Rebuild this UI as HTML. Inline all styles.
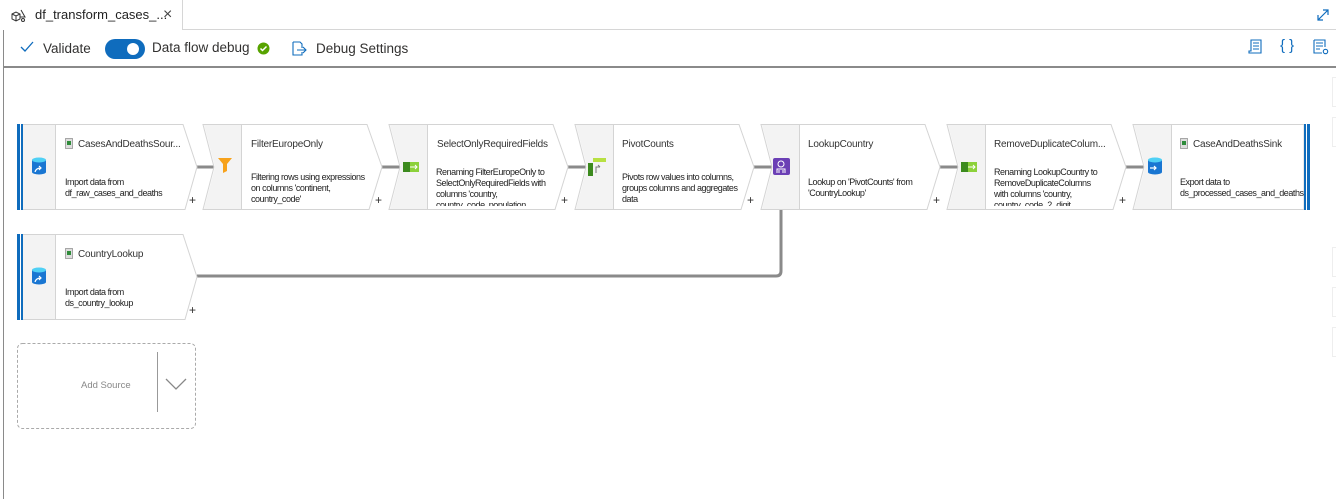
<!DOCTYPE html>
<html><head><meta charset="utf-8"><style>
*{margin:0;padding:0;box-sizing:border-box}
body{width:1336px;height:499px;background:#fff;position:relative;overflow:hidden;font-family:"Liberation Sans",sans-serif;color:#323130}
.a{position:absolute;white-space:nowrap}
.t{font-size:10px;letter-spacing:-0.2px;color:#333}
.d{font-size:9px;letter-spacing:-0.45px;line-height:11px;color:#222;white-space:normal;overflow:hidden}
.tb{font-size:13.5px;color:#323130}
</style></head><body>
<div class="a" style="left:0;top:0;width:183px;height:30px;border-right:1px solid #d6d6d6;background:#fff"></div>
<div class="a" style="left:183px;top:29px;width:1153px;height:1px;background:#d6d6d6"></div>
<svg class="a" style="left:10px;top:8px" width="18" height="16" viewBox="0 0 18 16" fill="none" stroke="#333" stroke-width="1"><path d="M2 6l4-2 4 2v5l-4 2-4-2z M2 6l4 2 4-2 M6 8v5"/><path d="M11 2l4 7h-5"/><circle cx="13" cy="12" r="1.5"/></svg>
<div class="a" style="left:35px;top:7px;font-size:13px;color:#222">df_transform_cases_...</div>
<div class="a" style="left:163px;top:6px;font-size:16px;color:#444">×</div>
<svg class="a" style="left:1316px;top:8px" width="14" height="14" viewBox="0 0 14 14" fill="none" stroke="#0f6cbd" stroke-width="1.2"><path d="M2 12L12 2M7 2h5v5M2 7v5h5"/></svg>
<div class="a" style="left:3px;top:30px;width:1px;height:469px;background:#8a8a8a"></div>
<div class="a" style="left:3px;top:66px;width:1333px;height:2px;background:#8a8a8a"></div>
<svg class="a" style="left:20px;top:41px" width="14" height="12" viewBox="0 0 14 12" fill="none" stroke="#0f6cbd" stroke-width="1.3"><path d="M1 6l4 4 8-9"/></svg>
<div class="a tb" style="left:43px;top:41px">Validate</div>
<div class="a" style="left:105px;top:39px;width:40px;height:20px;border-radius:10px;background:#0f6cbd"></div>
<div class="a" style="left:127px;top:43px;width:12px;height:12px;border-radius:6px;background:#fff"></div>
<div class="a tb" style="left:152px;top:40px">Data flow debug</div>
<svg class="a" style="left:257px;top:42px" width="13" height="13" viewBox="0 0 13 13"><circle cx="6.5" cy="6.5" r="6" fill="#57a300"/><path d="M3.5 6.5l2 2 4-4" stroke="#fff" stroke-width="1.5" fill="none"/></svg>
<svg class="a" style="left:290px;top:40px" width="18" height="18" viewBox="0 0 18 18" fill="none" stroke="#0f6cbd" stroke-width="1.1"><path d="M3 2h7l2 2v4M12 12v3H3V2"/><path d="M7 10h9M13 7l3 3-3 3"/></svg>
<div class="a tb" style="left:316px;top:41px">Debug Settings</div>
<svg class="a" style="left:1247px;top:38px" width="16" height="18" viewBox="0 0 16 18" fill="none" stroke="#0f6cbd" stroke-width="1.1"><path d="M4 2h10v13H2v-2h2zM6 5h6M6 8h6M6 11h6"/></svg>
<div class="a" style="left:1280px;top:37px;font-size:15px;color:#0f6cbd">{ }</div>
<svg class="a" style="left:1312px;top:38px" width="18" height="18" viewBox="0 0 18 18" fill="none" stroke="#0f6cbd" stroke-width="1.1"><path d="M2 2h11v7M10 15H2V2M4 5h7M4 8h7M4 11h4"/><circle cx="13.5" cy="13.5" r="2.2"/></svg>
<div class="a" style="left:1332px;top:77px;width:6px;height:30px;border:1px solid #eee"></div>
<div class="a" style="left:1332px;top:117px;width:6px;height:30px;border:1px solid #eee"></div>
<div class="a" style="left:1332px;top:247px;width:6px;height:30px;border:1px solid #eee"></div>
<div class="a" style="left:1332px;top:287px;width:6px;height:30px;border:1px solid #eee"></div>
<div class="a" style="left:1332px;top:327px;width:6px;height:30px;border:1px solid #eee"></div>

<svg class="a" style="left:0;top:0" width="1336" height="499">
<g stroke="#8a8a8a" stroke-width="3" fill="none">
<path d="M196 167H215M382 167H401M568 167H587M754 167H773M940 167H959M1126 167H1145"/>
<path d="M197 276H776Q781 276 781 271V210"/>
</g>
<g stroke="#d4d4d4" stroke-width="1">
<path d="M23 124.5H183L197 167L185 209.5H23Z" fill="#fff"/>
<path d="M203 124.5H367L382 167L369 209.5H203L214 167Z" fill="#fff"/>
<path d="M389 124.5H553L568 167L555 209.5H389L400 167Z" fill="#fff"/>
<path d="M575 124.5H739L754 167L741 209.5H575L586 167Z" fill="#fff"/>
<path d="M761 124.5H925L940 167L927 209.5H761L772 167Z" fill="#fff"/>
<path d="M947 124.5H1111L1126 167L1113 209.5H947L958 167Z" fill="#fff"/>
<path d="M1133 124.5H1304V209.5H1133L1144 167Z" fill="#fff"/>
<path d="M23 234.5H183L197 277L185 319.5H23Z" fill="#fff"/>
</g>
<g fill="#f3f3f3" stroke="none">
<rect x="23" y="125" width="32" height="84"/>
<rect x="23" y="235" width="32" height="84"/>
<path d="M204 125H241V209H204L215 167Z"/>
<path d="M390 125H427V209H390L401 167Z"/>
<path d="M576 125H613V209H576L587 167Z"/>
<path d="M762 125H799V209H762L773 167Z"/>
<path d="M948 125H985V209H948L959 167Z"/>
<path d="M1134 125H1171V209H1134L1145 167Z"/>
</g>
<g stroke="#d4d4d4"><path d="M55.5 125V209M55.5 235V319M241.5 125V209M427.5 125V209M613.5 125V209M799.5 125V209M985.5 125V209M1171.5 125V209"/></g>
<g fill="#0f6cbd">
<rect x="17" y="124" width="3" height="86"/><rect x="21" y="124" width="2" height="86"/>
<rect x="17" y="234" width="3" height="86"/><rect x="21" y="234" width="2" height="86"/>
<rect x="1304" y="124" width="2" height="86"/><rect x="1307" y="124" width="3" height="86"/>
</g>
<g>
<path d="M32 160v12a7 2.5 0 0 0 14 0V160Z" fill="#1976d2"/><ellipse cx="39" cy="160" rx="7" ry="2.5" fill="#4fd0f5"/>
<path d="M35 172q1-4 6-4M39 166l2 2-2 2" stroke="#fff" stroke-width="1.2" fill="none"/>
<path d="M32 270v12a7 2.5 0 0 0 14 0V270Z" fill="#1976d2"/><ellipse cx="39" cy="270" rx="7" ry="2.5" fill="#4fd0f5"/>
<path d="M35 282q1-4 6-4M39 276l2 2-2 2" stroke="#fff" stroke-width="1.2" fill="none"/>
<path d="M1148 160v12a7 2.5 0 0 0 14 0V160Z" fill="#1976d2"/><ellipse cx="1155" cy="160" rx="7" ry="2.5" fill="#4fd0f5"/>
<path d="M1150 168h6M1154 166l2 2-2 2" stroke="#fff" stroke-width="1.2" fill="none"/>
</g>
<path d="M218 158h14l-5 6v7l-4 2v-9z" fill="#f7a21b"/>
<rect x="403" y="162" width="7" height="10" fill="#3c8a1e"/><rect x="410" y="162" width="9" height="10" fill="#8cd13a"/><path d="M410 167h7M415 165l2 2-2 2" stroke="#fff" fill="none"/>
<rect x="961" y="162" width="7" height="10" fill="#3c8a1e"/><rect x="968" y="162" width="9" height="10" fill="#8cd13a"/><path d="M968 167h7M973 165l2 2-2 2" stroke="#fff" fill="none"/>
<rect x="588" y="163" width="5" height="13" fill="#3c8a1e"/><rect x="593" y="158" width="13" height="4" fill="#b7e042"/><path d="M596 173v-6h4M598 165l2 2" stroke="#777" fill="none"/>
<rect x="773" y="158" width="17" height="17" rx="2" fill="#6b3fb5"/><circle cx="781" cy="164" r="3" stroke="#fff" fill="none"/><path d="M777 173v-4h8v4M779 173v-3M783 173v-3" stroke="#fff" fill="none"/>
<g fill="#ddd" stroke="#888" stroke-width="0.7">
<rect x="65.5" y="138.5" width="7" height="10"/><rect x="65.5" y="248.5" width="7" height="10"/><rect x="1180.5" y="138.5" width="7" height="10"/>
</g>
<g fill="#2e8b3a"><rect x="67" y="141" width="4" height="4"/><rect x="67" y="251" width="4" height="4"/><rect x="1182" y="141" width="4" height="4"/></g>
<rect x="17.5" y="343.5" width="178" height="85" rx="5" fill="none" stroke="#aaa" stroke-dasharray="3,2"/>
<path d="M157.5 352V412" stroke="#999"/>
<path d="M166 379l10 10 10-10" stroke="#888" stroke-width="1.3" fill="none"/>
</svg>

<div class="a t" style="left:78px;top:139px">CasesAndDeathsSour...</div>
<div class="a d" style="left:65px;top:177px;width:110px">Import data from df_raw_cases_and_deaths</div>
<div class="a t" style="left:251px;top:139px">FilterEuropeOnly</div>
<div class="a d" style="left:251px;top:172px;width:118px;height:33px">Filtering rows using expressions on columns 'continent, country_code'</div>
<div class="a t" style="left:437px;top:139px">SelectOnlyRequiredFields</div>
<div class="a d" style="left:436px;top:167px;width:112px;height:39px">Renaming FilterEuropeOnly to SelectOnlyRequiredFields with columns 'country, country_code, population, indicator, daily_count'</div>
<div class="a t" style="left:622px;top:139px">PivotCounts</div>
<div class="a d" style="left:622px;top:172px;width:120px;height:33px">Pivots row values into columns, groups columns and aggregates data</div>
<div class="a t" style="left:808px;top:139px">LookupCountry</div>
<div class="a d" style="left:808px;top:177px;width:112px">Lookup on 'PivotCounts' from 'CountryLookup'</div>
<div class="a t" style="left:994px;top:139px">RemoveDuplicateColum...</div>
<div class="a d" style="left:994px;top:167px;width:108px;height:39px">Renaming LookupCountry to RemoveDuplicateColumns with columns 'country, country_code_2_digit, country_code_3_digit'</div>
<div class="a t" style="left:1193px;top:139px">CaseAndDeathsSink</div>
<div class="a d" style="left:1180px;top:177px;width:125px">Export data to ds_processed_cases_and_deaths</div>
<div class="a t" style="left:78px;top:249px">CountryLookup</div>
<div class="a d" style="left:65px;top:287px;width:110px">Import data from ds_country_lookup</div>
<div class="a" style="left:81px;top:380px;font-size:9.5px;color:#888">Add Source</div>
<div class="a" style="font-size:12px;left:189px;top:193px">+</div>
<div class="a" style="font-size:12px;left:375px;top:193px">+</div>
<div class="a" style="font-size:12px;left:561px;top:193px">+</div>
<div class="a" style="font-size:12px;left:747px;top:193px">+</div>
<div class="a" style="font-size:12px;left:933px;top:193px">+</div>
<div class="a" style="font-size:12px;left:1119px;top:193px">+</div>
<div class="a" style="font-size:12px;left:189px;top:303px">+</div>
</body></html>
